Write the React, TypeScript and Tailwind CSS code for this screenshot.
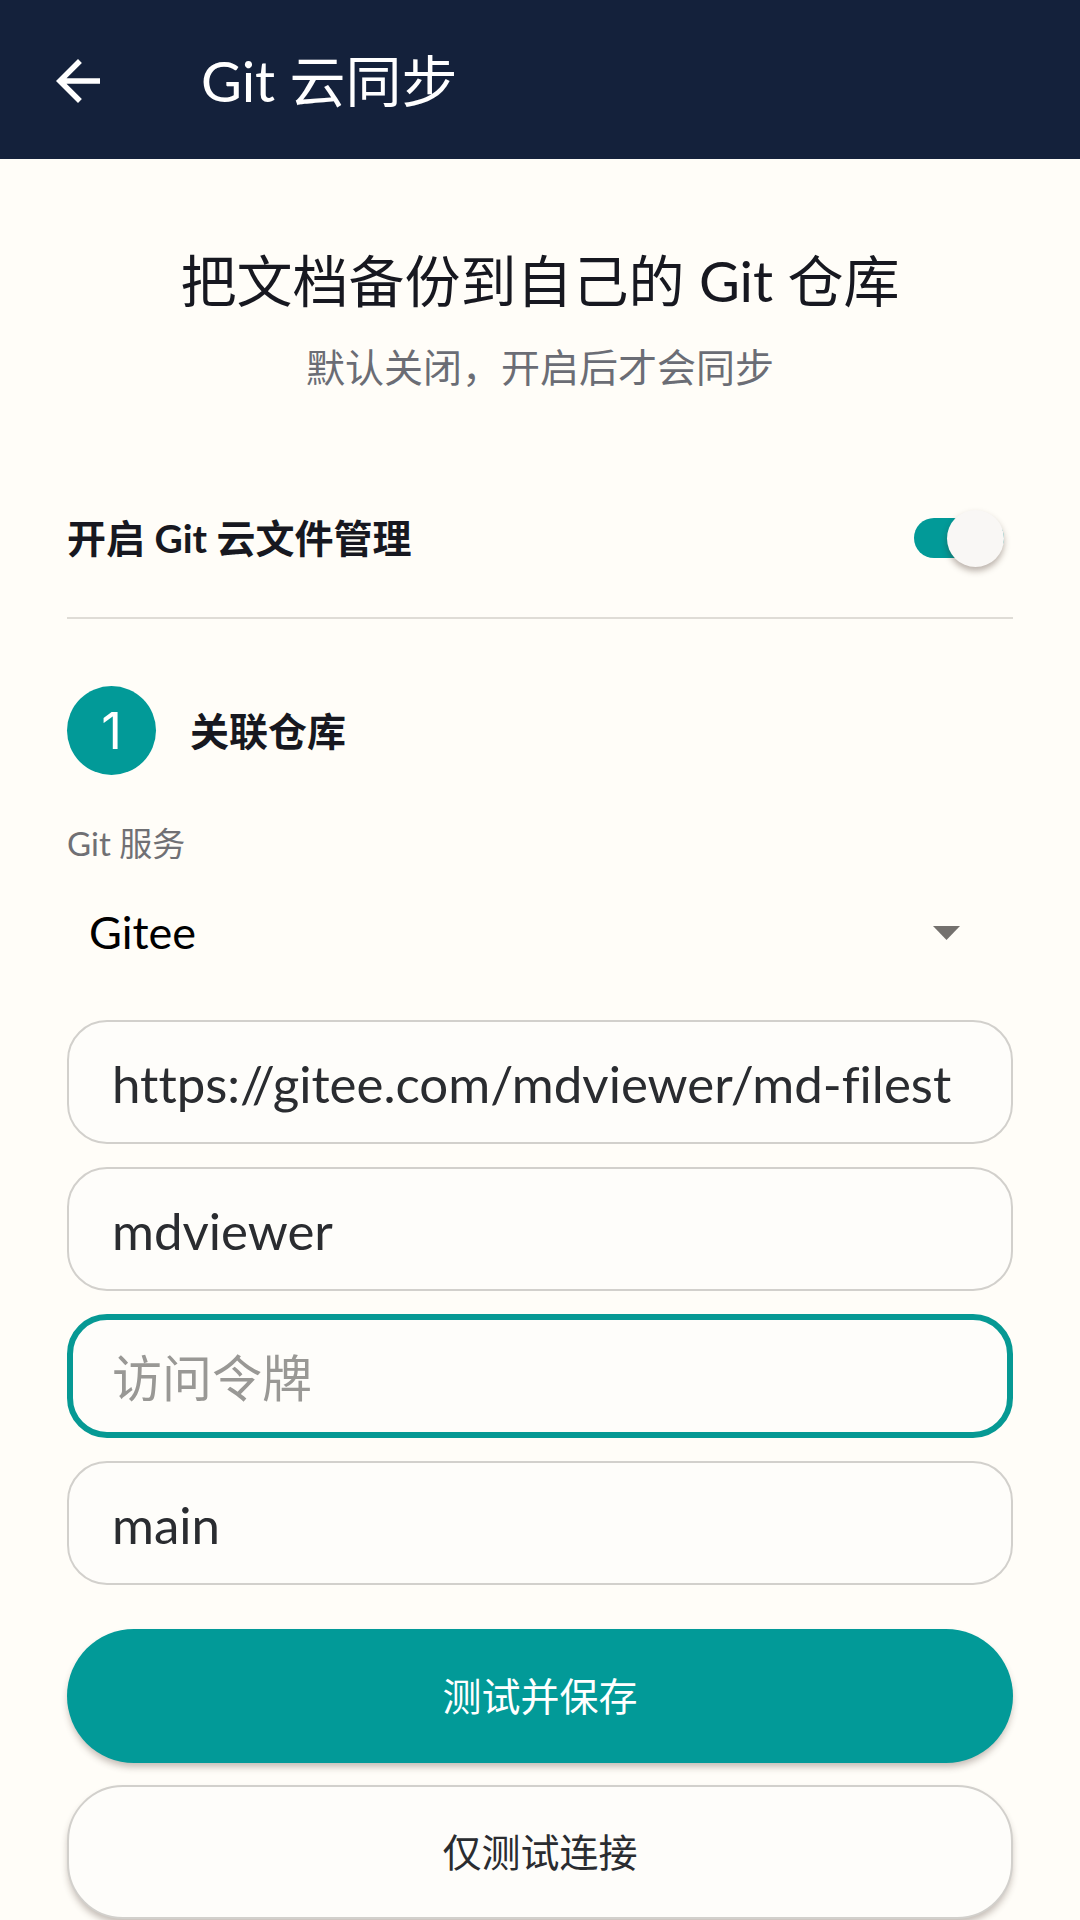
import { useState } from "react";

const inputClass =
  "block h-[124px] w-full rounded-[40px] border-2 border-[#d2d0cc] bg-[#fefdfa] pt-[3px] pl-[43px] pr-6 text-[51px] text-[#2a2c30] outline-none";
const activeInputClass =
  "block h-[124px] w-full rounded-[40px] border-6 border-[#069994] bg-[#fefdfa] pt-[3px] pl-[39px] pr-6 text-[51px] text-[#2a2c30] outline-none placeholder:text-[50px] placeholder:text-[#999895] placeholder:opacity-100";

export default function App() {
  const [enabled, setEnabled] = useState(true);
  const [service, setService] = useState("Gitee");

  return (
    <div
      lang="zh-CN"
      className="min-h-screen overflow-hidden bg-[#fffdf8] font-['Lato','Noto_Sans_CJK_SC',sans-serif] text-[#171820] [font-variant-ligatures:none]"
    >
      <header className="flex h-[159px] items-center bg-[#14213b] pt-[2px] pl-[45px] text-white">
        <button type="button" aria-label="返回" className="mr-[90px]">
          <svg className="size-[66px]" viewBox="0 0 24 24" fill="currentColor" aria-hidden="true">
            <path d="M20 11H7.83l5.59-5.59L12 4l-8 8 8 8 1.41-1.41L7.83 13H20v-2z" />
          </svg>
        </button>
        <h1 className="text-[56px] leading-[80px]">Git 云同步</h1>
      </header>

      <main className="px-[67px]">
        <section className="pt-[82px] text-center">
          <h2 className="text-[56px] leading-[80px]">把文档备份到自己的 Git 仓库</h2>
          <p className="mt-4 text-[39px] leading-[60px] text-[#6b6d75]">默认关闭，开启后才会同步</p>
        </section>

        <label className="mt-[62px] flex h-40 cursor-pointer items-center justify-between border-b-2 border-[#dfdcd6] pr-[9px]">
          <span className="text-[39px] leading-[60px] font-bold">开启 Git 云文件管理</span>
          <span className="relative flex h-[58px] w-[90px] items-center">
            <input
              type="checkbox"
              role="switch"
              aria-label="开启 Git 云文件管理"
              checked={enabled}
              onChange={(e) => setEnabled(e.target.checked)}
              className="peer h-10 w-full appearance-none rounded-full bg-[#c8c8c8] checked:bg-[#029a98]"
            />
            <span className="pointer-events-none absolute left-0 size-[57px] rounded-full bg-[#f9f7f5] shadow-[0_4px_6px_rgba(60,40,30,0.35)] peer-checked:right-0 peer-checked:left-auto" />
          </span>
        </label>

        <section>
          <div className="mt-[67px] flex items-center gap-[34px]">
            <span className="flex size-[89px] items-center justify-center rounded-full bg-[#029a98] font-['Inter'] text-[51px] leading-none text-white">
              1
            </span>
            <h3 className="text-[39px] leading-[60px] font-bold">关联仓库</h3>
          </div>

          <label htmlFor="service" className="mt-11 block text-[33px] leading-12 text-[#707074]">
            Git 服务
          </label>
          <div className="relative mt-6 flex h-[84px] items-center">
            <select
              id="service"
              value={service}
              onChange={(e) => setService(e.target.value)}
              className="h-full w-full appearance-none bg-transparent pl-[22px] text-[45px] text-black outline-none"
            >
              <option>Gitee</option>
              <option>GitHub</option>
            </select>
            <svg
              className="pointer-events-none absolute right-[53px] h-[14px] w-[27px]"
              viewBox="0 0 27 14"
              fill="#74716e"
              aria-hidden="true"
            >
              <path d="M0 0h27L13.500 14z" />
            </svg>
          </div>

          <form className="mt-[45px]" onSubmit={(e) => e.preventDefault()}>
            <div className="flex flex-col gap-[23px]">
              <input aria-label="仓库地址" defaultValue="https://gitee.com/mdviewer/md-filest" className={inputClass} />
              <input aria-label="用户名" defaultValue="mdviewer" className={inputClass} />
              <input aria-label="访问令牌" placeholder="访问令牌" className={activeInputClass} />
              <input aria-label="分支" defaultValue="main" className={inputClass} />
            </div>
            <button
              type="submit"
              className="mt-11 block h-[134px] w-full rounded-full bg-[#029a98] text-[39px] text-white shadow-[0_5px_7px_-1px_rgba(60,40,30,0.3)]"
            >
              测试并保存
            </button>
            <button
              type="button"
              className="mt-[22px] block h-[134px] w-full rounded-[56px] border-2 border-[#d2d0cc] bg-[#fefdfa] text-[39px] text-[#2a2c30] shadow-[0_5px_7px_-1px_rgba(60,40,30,0.3)]"
            >
              仅测试连接
            </button>
          </form>
        </section>
      </main>
    </div>
  );
}
